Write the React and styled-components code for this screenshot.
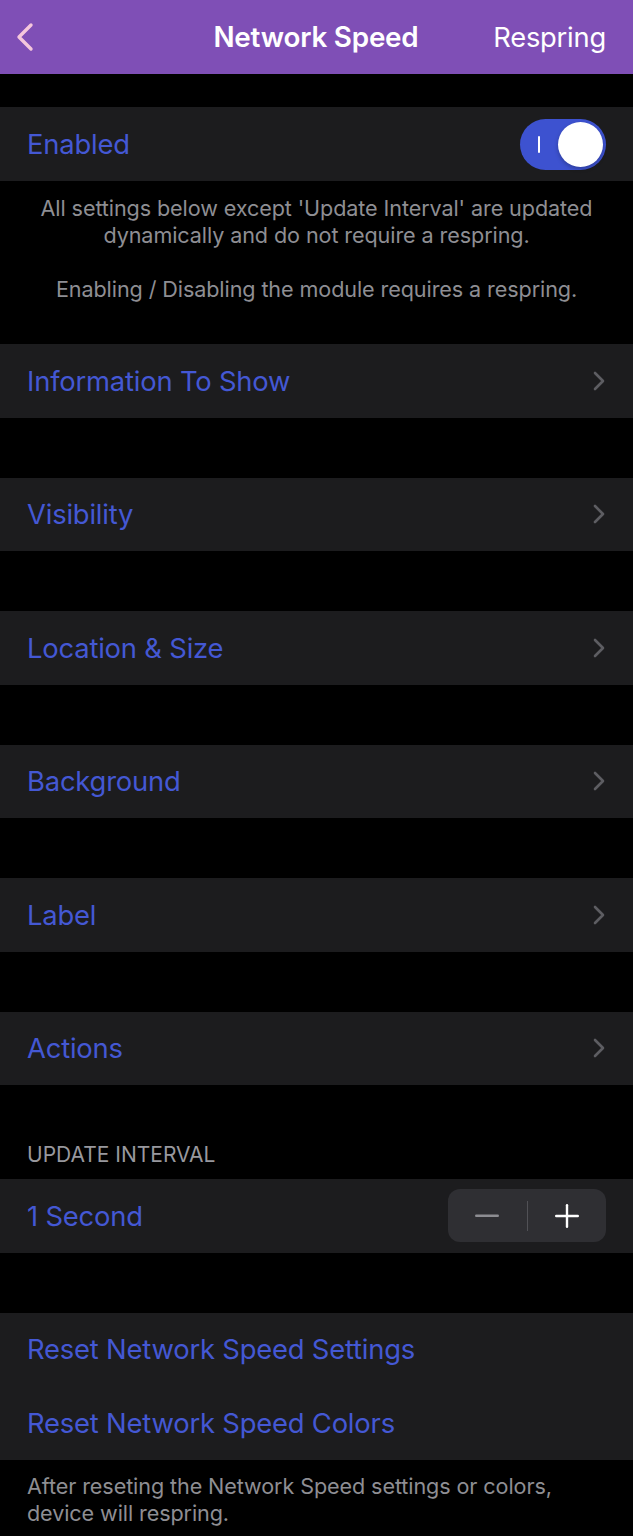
import React from "react";
import styled, { createGlobalStyle } from "styled-components";

const Global = createGlobalStyle`
  html, body { margin: 0; padding: 0; background: #000; }
  body { font-family: Inter, "Noto Sans", sans-serif; -webkit-font-smoothing: antialiased; }
`;

const Page = styled.div`
  width: 633px;
  min-height: 1536px;
  background: #000;
  display: flex;
  flex-direction: column;
`;

const NavBar = styled.header`
  height: 74px;
  background: #7f4fb6;
  display: grid;
  grid-template-columns: 1fr auto 1fr;
  align-items: center;
  padding: 0 27px 0 14px;
  box-sizing: border-box;
`;

const BackButton = styled.div`
  display: flex;
  align-items: center;
  justify-self: start;
`;

const Title = styled.h1`
  margin: 0;
  font-size: 27.8px;
  font-weight: 600;
  color: #fff;
  letter-spacing: -0.2px;
  position: relative;
  left: 6px;
`;

const NavAction = styled.div`
  justify-self: end;
  font-size: 27.3px;
  color: #fff;
  letter-spacing: -0.2px;
`;

const Group = styled.section`
  margin-top: ${(p) => p.$top}px;
  background: #1c1c1e;
  display: flex;
  flex-direction: column;
`;

const Row = styled.div`
  height: ${(p) => p.$h || 73.5}px;
  display: flex;
  align-items: center;
  justify-content: space-between;
  padding: 0 27px;
  box-sizing: border-box;
`;

const Label = styled.span`
  font-size: 27.4px;
  color: #4458d4;
  letter-spacing: -0.2px;
`;

const Footer = styled.p`
  margin: 0;
  padding: ${(p) => p.$pad};
  color: #8e8e93;
  font-size: 21.6px;
  line-height: 27px;
  text-align: ${(p) => p.$align || "left"};
  white-space: pre-line;
  letter-spacing: -0.1px;
`;

const SectionHeader = styled.div`
  margin-top: 56px;
  padding: 0 27px 11px;
  font-size: 21px;
  line-height: 27px;
  color: #98989e;
`;

const Switch = styled.div`
  width: 86px;
  height: 51px;
  border-radius: 26px;
  background: #3d52d0;
  position: relative;
  box-sizing: border-box;
`;

const SwitchMark = styled.span`
  position: absolute;
  left: 18px;
  top: 17px;
  width: 2px;
  height: 17px;
  background: #fff;
  border-radius: 1px;
`;

const Knob = styled.span`
  position: absolute;
  right: 3px;
  top: 3px;
  width: 45px;
  height: 45px;
  border-radius: 50%;
  background: #fff;
  box-shadow: 0 2px 4px rgba(0, 0, 0, 0.25);
`;

const Stepper = styled.div`
  width: 158px;
  height: 53px;
  border-radius: 12px;
  background: #2f2f33;
  display: grid;
  grid-template-columns: 1fr 1px 1fr;
  align-items: center;
`;

const StepDivider = styled.span`
  width: 1px;
  height: 30px;
  background: #515156;
`;

const StepButton = styled.div`
  display: flex;
  align-items: center;
  justify-content: center;
`;

const Chevron = () => (
  <svg width="14" height="22" viewBox="0 0 14 22" fill="none">
    <path d="M3 3 L11 11 L3 19" stroke="#5d5d62" strokeWidth="2.6" strokeLinecap="round" strokeLinejoin="round" />
  </svg>
);

const LinkRow = ({ label, top }) => (
  <Group $top={top}>
    <Row>
      <Label>{label}</Label>
      <Chevron />
    </Row>
  </Group>
);

export default function App() {
  return (
    <Page>
      <Global />
      <NavBar>
        <BackButton>
          <svg width="22" height="32" viewBox="0 0 22 32" fill="none">
            <path d="M17 4 L5 16 L17 28" stroke="#f5c7dc" strokeWidth="3.4" strokeLinecap="round" strokeLinejoin="round" />
          </svg>
        </BackButton>
        <Title>Network Speed</Title>
        <NavAction>Respring</NavAction>
      </NavBar>

      <Group $top={33}>
        <Row $h={74}>
          <Label>Enabled</Label>
          <Switch>
            <SwitchMark />
            <Knob />
          </Switch>
        </Row>
      </Group>
      <Footer $align="center" $pad="14px 20px 41px">
        {"All settings below except 'Update Interval' are updated\ndynamically and do not require a respring.\n\nEnabling / Disabling the module requires a respring."}
      </Footer>

      <LinkRow label="Information To Show" top={0} />
      <LinkRow label="Visibility" top={60} />
      <LinkRow label="Location & Size" top={60} />
      <LinkRow label="Background" top={60} />
      <LinkRow label="Label" top={60} />
      <LinkRow label="Actions" top={60} />

      <SectionHeader>UPDATE INTERVAL</SectionHeader>
      <Group $top={0}>
        <Row>
          <Label>1 Second</Label>
          <Stepper>
            <StepButton>
              <svg width="24" height="4" viewBox="0 0 24 4">
                <rect x="0" y="0.5" width="24" height="2.4" rx="1.2" fill="#8d8d92" />
              </svg>
            </StepButton>
            <StepDivider />
            <StepButton>
              <svg width="24" height="24" viewBox="0 0 24 24">
                <rect x="0" y="10.8" width="24" height="2.4" rx="1.2" fill="#fff" />
                <rect x="10.8" y="0" width="2.4" height="24" rx="1.2" fill="#fff" />
              </svg>
            </StepButton>
          </Stepper>
        </Row>
      </Group>

      <Group $top={60}>
        <Row>
          <Label>Reset Network Speed Settings</Label>
        </Row>
        <Row>
          <Label>Reset Network Speed Colors</Label>
        </Row>
      </Group>
      <Footer $pad="13px 27px 20px">
        {"After reseting the Network Speed settings or colors,\ndevice will respring."}
      </Footer>
    </Page>
  );
}
